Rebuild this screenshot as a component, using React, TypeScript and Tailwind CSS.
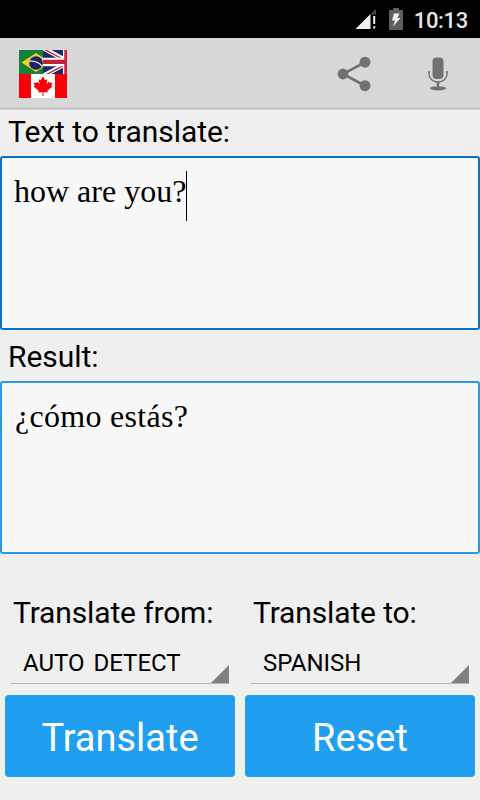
import { useState } from "react";

function SignalIcon() {
  return (
    <svg width="22" height="20" viewBox="0 0 22 20" aria-hidden>
      <path d="M15.500 5V20H0.500Z" fill="#f1f1f1" />
      <path d="M21 0V5.500H15.500Z" fill="#4a4a4a" />
      <path d="M18.200 7h2v8h-2zM18.200 17.300h2v2.200h-2z" fill="#f1f1f1" />
    </svg>
  );
}

function BatteryIcon() {
  return (
    <svg width="14" height="22" viewBox="0 0 14 22" aria-hidden>
      <path d="M4 0h6v2h4v20H0V2h4z" fill="#5e5e5e" />
      <path d="M5 5.500H10.500L8.500 10H11.500L4 18.500L6 12.500H3Z" fill="#f1f1f1" />
    </svg>
  );
}

function FlagsLogo() {
  return (
    <svg width="48" height="48" viewBox="0 0 48 48" aria-hidden>
      <path d="M0 0h24v24H0z" fill="#168239" />
      <path d="M2.500 12.500L17 3L31.500 12.500L17 22Z" fill="#f3cf28" />
      <circle cx="17" cy="13" r="6.800" fill="#1d246b" />
      <path d="M10.500 11.300Q18 10.500 23 16" fill="none" stroke="#dfe6ee" strokeWidth="1.200" />
      <svg x="24" y="0" width="24" height="24" viewBox="0 0 24 24">
        <path d="M0 0h24v24H0z" fill="#1b2a70" />
        <path d="M0 -2L24 11M0 26L24 13" stroke="#fff" strokeWidth="4.500" />
        <path d="M0 -1.500L24 11.500M0 26.500L24 13.500" stroke="#cf2038" strokeWidth="1.400" />
        <path d="M0 7.800h20V0h4v24h-4v-7.800H0z" fill="#fff" />
        <path d="M0 9.700h21.300V0H24v24h-2.700v-9.900H0z" fill="#c8203a" />
      </svg>
      <path d="M0 24h48v24H0z" fill="#f80008" />
      <path d="M12 24h24v24H12z" fill="#fff" />
      <path
        d="M24 26.500L26.300 30.300L28.300 29.300L27.500 34L30 31.500L30.700 33L33.500 32.600L32.300 35.700L33.500 36.500L28.300 40.700L28.800 42.500L24.500 42V46H23.500V42L19.200 42.500L19.700 40.700L14.500 36.500L15.700 35.700L14.500 32.600L17.300 33L18 31.500L20.500 34L19.700 29.300L21.700 30.300Z"
        fill="#f80008"
      />
    </svg>
  );
}

function ShareIcon() {
  return (
    <svg width="34" height="36" viewBox="0 0 34 36" fill="#717171" aria-hidden>
      <path d="M27.500 6.500L6 18L27.500 29.500" fill="none" stroke="#717171" strokeWidth="2.600" />
      <circle cx="6" cy="18" r="5.400" />
      <circle cx="28" cy="6.200" r="5.500" />
      <circle cx="28" cy="29.700" r="5.500" />
    </svg>
  );
}

function MicIcon() {
  return (
    <svg width="22" height="34" viewBox="0 0 22 34" fill="#717171" aria-hidden>
      <rect x="5.500" y="0.500" width="11" height="21.500" rx="4" />
      <path
        d="M1 15H3M19 15H21M2 15V17C2 21.500 6 25 11 25S20 21.500 20 17V15"
        fill="none"
        stroke="#717171"
        strokeWidth="1.400"
      />
      <path d="M9.500 25h3l-.5 5h-2z" />
      <ellipse cx="11" cy="31.300" rx="8.200" ry="2.100" />
    </svg>
  );
}

function LanguageSelect({ label, value }: { label: string; value: string }) {
  return (
    <div className="w-1/2 px-[11px]">
      <p className="pl-0.5 text-[30px] leading-9 tracking-[-0.14px]">{label}</p>
      <button
        type="button"
        className="mt-[10px] flex h-[43px] w-[218px] items-end justify-between border-b border-[#b5b5b5] pl-3 text-left text-[24px]"
      >
        <span className="mb-[6px] leading-7 [word-spacing:3px]">{value}</span>
        <svg width="18" height="18" viewBox="0 0 18 18" className="shrink-0" aria-hidden>
          <path d="M18 0V18H0Z" fill="#808080" />
        </svg>
      </button>
    </div>
  );
}

export default function App() {
  const [text, setText] = useState("how are you?");
  const [result, setResult] = useState("¿cómo estás?");

  function reset() {
    setText("");
    setResult("");
  }

  return (
    <div className="flex h-[800px] w-[480px] flex-col overflow-hidden bg-[#efefef] font-['Roboto',sans-serif] text-black">
      <div className="flex h-[38px] shrink-0 items-center justify-end bg-black pr-3 text-[#e6e6e6]">
        <SignalIcon />
        <span className="ml-3">
          <BatteryIcon />
        </span>
        <span className="ml-[11px] pt-[3px] text-[22px] leading-none font-medium tracking-[-0.3px]">10:13</span>
      </div>

      <header className="flex h-[72px] shrink-0 items-center border-b-[3px] border-[#cbcbcb] bg-[#d8d8d8] pt-[3px] pr-[31px] pl-[19px]">
        <FlagsLogo />
        <button type="button" aria-label="Share" className="ml-auto">
          <ShareIcon />
        </button>
        <button type="button" aria-label="Speak" className="ml-[56px]">
          <MicIcon />
        </button>
      </header>

      <p className="h-[46px] shrink-0 pl-2 text-[30px] leading-[44px] tracking-[-0.05px]">Text to translate:</p>
      <div className="flex h-[174px] shrink-0 items-start rounded-[3px] border-2 border-[#0b72bf] bg-[#f8f8f8] pt-[13px] pl-3 font-['Liberation_Serif',serif] text-[32px] leading-10">
        <span>{text}</span>
        <span className="h-[50px] w-px bg-black" />
      </div>

      <p className="h-[51px] shrink-0 pt-[5px] pl-2 text-[30px] leading-[44px] tracking-[-0.05px]">Result:</p>
      <div className="h-[173px] shrink-0 rounded-[3px] border-2 border-[#2b9be0] bg-[#f8f8f8] pt-[13px] pl-[13px] font-['Liberation_Serif',serif] text-[32px] leading-10 tracking-[0.3px]">
        {result}
      </div>

      <div className="mt-[41px] flex">
        <LanguageSelect label="Translate from:" value="AUTO DETECT" />
        <LanguageSelect label="Translate to:" value="SPANISH" />
      </div>

      <div className="mt-[11px] flex gap-[10px] px-[5px] text-[38px] text-white">
        <button type="button" className="h-[82px] flex-1 rounded bg-[#209ff0] pt-1">
          Translate
        </button>
        <button type="button" onClick={reset} className="h-[82px] flex-1 rounded bg-[#209ff0] pt-1">
          Reset
        </button>
      </div>
    </div>
  );
}
